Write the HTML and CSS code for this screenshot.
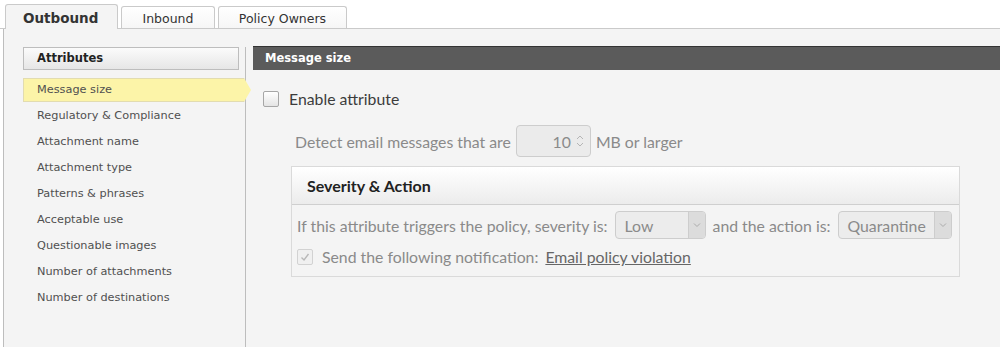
FILE: index.html
```html
<!DOCTYPE html>
<html lang="en">
<head>
    <meta charset="UTF-8">
    <title>Policy - Outbound</title>
    <link rel="stylesheet" href="styles.css">
</head>
<body>
    <div class="tabs">
        <div class="tab tab-active">Outbound</div>
        <div class="tab tab-inbound">Inbound</div>
        <div class="tab tab-owners">Policy Owners</div>
    </div>

    <div class="panel">
        <div class="sidebar">
            <div class="sidebar-title">Attributes</div>
            <ul class="attr-list">
                <li class="attr-item selected">Message size</li>
                <li class="attr-item">Regulatory &amp; Compliance</li>
                <li class="attr-item">Attachment name</li>
                <li class="attr-item">Attachment type</li>
                <li class="attr-item">Patterns &amp; phrases</li>
                <li class="attr-item">Acceptable use</li>
                <li class="attr-item">Questionable images</li>
                <li class="attr-item">Number of attachments</li>
                <li class="attr-item">Number of destinations</li>
            </ul>
        </div>

        <div class="main">
            <div class="main-title">Message size</div>

            <label class="enable-row">
                <span class="check"></span>
                Enable attribute
            </label>

            <div class="detect-row">
                <span>Detect email messages that are</span>
                <div class="spinner">
                    <span class="spin-value">10</span>
                    <span class="spin-arrows">
                        <svg width="8" height="18" viewBox="0 0 8 18">
                            <path d="M1 7 L4 4 L7 7" fill="none" stroke="#b5b5b5" stroke-width="1"/>
                            <path d="M1 11 L4 14 L7 11" fill="none" stroke="#b5b5b5" stroke-width="1"/>
                        </svg>
                    </span>
                </div>
                <span>MB or larger</span>
            </div>

            <div class="severity-box">
                <div class="severity-head">Severity &amp; Action</div>
                <div class="severity-body">
                    <div class="sev-row">
                        <span>If this attribute triggers the policy, severity is:</span>
                        <div class="select select-low">
                            <span class="select-text">Low</span>
                            <span class="select-btn">
                                <svg width="8" height="6" viewBox="0 0 8 6"><path d="M1 1.5 L4 4.5 L7 1.5" fill="none" stroke="#aaa" stroke-width="1"/></svg>
                            </span>
                        </div>
                        <span>and the action is:</span>
                        <div class="select select-action">
                            <span class="select-text">Quarantine</span>
                            <span class="select-btn">
                                <svg width="8" height="6" viewBox="0 0 8 6"><path d="M1 1.5 L4 4.5 L7 1.5" fill="none" stroke="#aaa" stroke-width="1"/></svg>
                            </span>
                        </div>
                    </div>
                    <div class="notify-row">
                        <span class="check check-done">
                            <svg width="12" height="12" viewBox="0 0 12 12"><path d="M2.5 6.5 L5 9 L9.5 3" fill="none" stroke="#b8b8b8" stroke-width="1.4"/></svg>
                        </span>
                        <span>Send the following notification:</span>
                        <a class="notify-link" href="#">Email policy violation</a>
                    </div>
                </div>
            </div>
        </div>
    </div>
</body>
</html>
```

FILE: styles.css
```css
body {
    margin: 0;
    background: #fff;
    font-family: 'DejaVu Sans', Verdana, sans-serif;
    color: #444;
    overflow: hidden;
}

/* tab strip */
.tabs {
    display: flex;
    align-items: flex-end;
    gap: 3px;
    height: 28px;
    padding-left: 5px;
    border-bottom: 1px solid #cacaca;
}

.tab {
    box-sizing: border-box;
    height: 22px;
    padding-top: 1px;
    border: 1px solid #cacaca;
    border-bottom: none;
    border-radius: 3px 3px 0 0;
    background: linear-gradient(#fff, #f6f6f6);
    font-size: 12.5px;
    color: #333;
    display: flex;
    align-items: center;
    justify-content: center;
}

.tab-active {
    width: 113px;
    height: 25px;
    margin-bottom: -1px;
    background: #f4f4f4;
    font-weight: bold;
    font-size: 13.5px;
    justify-content: flex-start;
    padding-left: 17px;
    padding-top: 2px;
}

.tab-inbound {
    width: 94px;
}

.tab-owners {
    width: 129px;
}

/* panel */
.panel {
    display: flex;
    height: 318px;
    margin-left: 3px;
    background: #f4f4f4;
    border-left: 1px solid #bdbdbd;
}

.sidebar {
    width: 241px;
    margin-top: 18px;
    border-right: 1px solid #bdbdbd;
    flex-shrink: 0;
}

.sidebar-title {
    box-sizing: border-box;
    margin-left: 19px;
    width: 216px;
    height: 23px;
    padding-left: 13px;
    line-height: 21px;
    border: 1px solid #bdbdbd;
    background: linear-gradient(#fbfbfb, #e6e6e6);
    font-weight: bold;
    font-size: 11.5px;
    color: #222;
}

.attr-list {
    list-style: none;
    margin: 8px 0 0 19px;
    padding: 0;
}

.attr-item {
    height: 26px;
    line-height: 26px;
    padding-left: 14px;
    font-size: 11.3px;
    color: #505050;
}

.selected {
    box-sizing: border-box;
    width: 228px;
    height: 24px;
    line-height: 23px;
    margin-bottom: 1px;
    background: #fcf4a8;
    box-shadow: inset 1px 1px 0 #e2dcb0, inset 0 -1px 0 #e2dcb0;
    clip-path: polygon(0 0, calc(100% - 7px) 0, 100% 50%, calc(100% - 7px) 100%, 0 100%);
}

/* main area */
.main {
    flex: 1;
    padding: 17px 0 0 7px;
    font-family: Lato, 'Open Sans', sans-serif;
    font-size: 15.8px;
    color: #8a8a8a;
}

.main-title {
    height: 23px;
    line-height: 23px;
    padding-left: 12px;
    border-top: 1px solid #333;
    background: #5b5b5b;
    color: #fff;
    font-family: 'DejaVu Sans', Verdana, sans-serif;
    font-weight: bold;
    font-size: 11.5px;
}

.enable-row {
    display: flex;
    align-items: center;
    gap: 10px;
    margin: 19px 0 0 10px;
    color: #3c3c3c;
    font-size: 15.8px;
}

.check {
    box-sizing: border-box;
    width: 16px;
    height: 16px;
    border: 1px solid #a6a6a6;
    border-radius: 2px;
    background: linear-gradient(#fff, #e4e4e4);
    display: inline-flex;
    align-items: center;
    justify-content: center;
}

.detect-row {
    display: flex;
    align-items: center;
    gap: 5px;
    margin: 17px 0 0 42px;
}

.spinner {
    box-sizing: border-box;
    width: 75px;
    height: 32px;
    border: 1px solid #cdcdcd;
    border-radius: 4px;
    background: #ebebeb;
    display: flex;
    align-items: center;
    justify-content: flex-end;
    gap: 5px;
    padding-right: 6px;
}

.spin-arrows {
    display: flex;
}

.severity-box {
    box-sizing: border-box;
    width: 669px;
    height: 111px;
    margin: 9px 0 0 38px;
    border: 1px solid #dadada;
}

.severity-head {
    height: 37px;
    line-height: 37px;
    padding-left: 15px;
    border-bottom: 1px solid #cfcfcf;
    background: linear-gradient(#fff, #ececec);
    color: #222;
    font-weight: bold;
    font-size: 16px;
}

.severity-body {
    padding: 6px 0 0 5px;
}

.sev-row {
    display: flex;
    align-items: center;
    gap: 7px;
}

.select {
    box-sizing: border-box;
    height: 28px;
    border: 1px solid #cdcdcd;
    border-radius: 4px;
    background: #ececec;
    display: flex;
    align-items: center;
    justify-content: space-between;
    overflow: hidden;
}

.select-low {
    width: 91px;
}

.select-action {
    width: 114px;
}

.select-text {
    padding-left: 9px;
}

.select-btn {
    width: 16px;
    height: 100%;
    background: #dcdcdc;
    border-left: 1px solid #cdcdcd;
    display: flex;
    align-items: center;
    justify-content: center;
}

.notify-row {
    display: flex;
    align-items: center;
    gap: 8px;
    margin-top: 8px;
}

.check-done {
    border-color: #d2d2d2;
    background: #f0f0f0;
    margin-right: 1px;
}

.notify-link {
    color: #666;
    text-decoration: underline;
    margin-left: -1px;
}
```
